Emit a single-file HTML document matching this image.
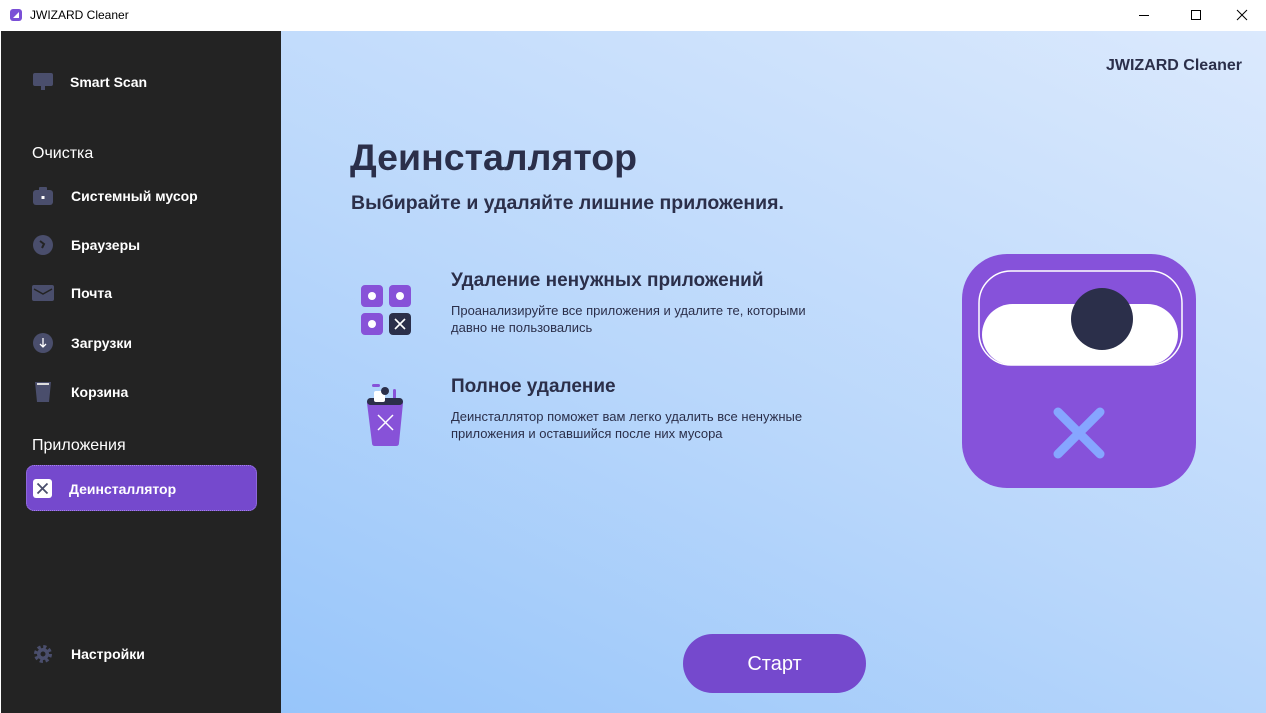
<!DOCTYPE html><html><head><meta charset="utf-8"><style>
*{margin:0;padding:0;box-sizing:border-box}
body{width:1266px;height:713px;overflow:hidden;font-family:"Liberation Sans",sans-serif;background:#fff;position:relative}
.tb{position:absolute;left:0;top:0;width:1266px;height:31px;background:#fff;font-size:12px;color:#000}
.sb{position:absolute;left:1px;top:31px;width:280px;height:682px;background:#232323;color:#fff}
.main{position:absolute;left:281px;top:31px;width:985px;height:682px;background:linear-gradient(25deg,#97c5fa 0%,#b9d7fb 45%,#dbe9fd 100%)}
.it{position:absolute;left:31px;font-size:14px;font-weight:bold;display:flex;align-items:center}
.it span{position:absolute;left:39px;white-space:nowrap}
.hd{position:absolute;left:31px;font-size:16px}
</style></head><body>
<div class="tb">
<svg style="position:absolute;left:9px;top:8px" width="14" height="14"><rect x="1" y="1" width="12" height="12" rx="3" fill="#7a4fd6"/><path d="M4 10 L10 4 L10 10Z" fill="#fff"/></svg>
<div style="position:absolute;left:30px;top:8px">JWIZARD Cleaner</div>
<div style="position:absolute;left:1139px;top:15px;width:10px;height:1px;background:#000"></div>
<div style="position:absolute;left:1191px;top:10px;width:10px;height:10px;border:1px solid #000"></div>
<svg style="position:absolute;left:1236px;top:9px" width="12" height="12"><path d="M1 1L11 11M11 1L1 11" stroke="#000"/></svg>
</div>
<div class="sb">
<div class="it" style="top:41px;left:31px"><svg width="22" height="20"><rect x="1" y="1" width="20" height="13" rx="2" fill="#4a4e6c"/><rect x="9" y="14" width="4" height="4" fill="#4a4e6c"/></svg><span style="left:38px">Smart Scan</span></div>
<div class="hd" style="top:114px">Очистка</div>
<div class="it" style="top:155px"><svg width="22" height="20"><rect x="1" y="4" width="20" height="15" rx="3" fill="#4a4e6c"/><rect x="7" y="1" width="8" height="4" rx="1" fill="#4a4e6c"/><rect x="9.5" y="10" width="3" height="3" fill="#fff"/></svg><span>Системный мусор</span></div>
<div class="it" style="top:203px"><svg width="22" height="22"><circle cx="11" cy="11" r="10" fill="#4a4e6c"/><path d="M8 7 L12 10 L10 14" stroke="#232323" stroke-width="2" fill="none"/></svg><span>Браузеры</span></div>
<div class="it" style="top:253px"><svg width="22" height="18"><rect x="0" y="1" width="22" height="16" rx="2" fill="#4a4e6c"/><path d="M2 5 L11 10 L20 5" stroke="#232323" stroke-width="1.5" fill="none"/></svg><span>Почта</span></div>
<div class="it" style="top:301px"><svg width="22" height="22"><circle cx="11" cy="11" r="10" fill="#4a4e6c"/><path d="M11 6V15M8 12L11 15L14 12" stroke="#fff" stroke-width="1.3" fill="none"/></svg><span>Загрузки</span></div>
<div class="it" style="top:349px"><svg width="22" height="24"><path d="M3 2H19L17 22H5Z" fill="#4a4e6c"/><rect x="5" y="3" width="12" height="2" fill="#ddd"/></svg><span>Корзина</span></div>
<div class="hd" style="top:406px">Приложения</div>
<div style="position:absolute;left:25px;top:434px;width:231px;height:46px;background:#7549cd;border-radius:8px;border:1px dotted #a685e8"></div>
<div class="it" style="top:447px"><svg width="22" height="22"><rect x="1" y="1" width="19" height="19" rx="3" fill="#fff"/><path d="M5.5 5.5L15.5 15.5M15.5 5.5L5.5 15.5" stroke="#4a4e6c" stroke-width="1.8"/></svg><span style="left:37px">Деинсталлятор</span></div>
<div class="it" style="top:612px"><svg width="22" height="22" viewBox="0 0 22 22"><circle cx="11" cy="11" r="7" fill="none" stroke="#4a4e6c" stroke-width="4" stroke-dasharray="3 2.5"/><circle cx="11" cy="11" r="6" fill="#4a4e6c"/><circle cx="11" cy="11" r="2.5" fill="#232323"/></svg><span>Настройки</span></div>
</div>
<div class="main">
<div style="position:absolute;right:24px;top:26px;font-size:16px;font-weight:bold;color:#2b2f4a">JWIZARD Cleaner</div>
<div style="position:absolute;left:69px;top:105px;font-size:37.5px;font-weight:bold;color:#2b2f4a">Деинсталлятор</div>
<div style="position:absolute;left:70px;top:161px;font-size:19.5px;font-weight:bold;color:#2b2f4a">Выбирайте и удаляйте лишние приложения.</div>
<svg style="position:absolute;left:79px;top:253px" width="52" height="52"><rect x="1" y="1" width="22" height="22" rx="4" fill="#8752d8"/><rect x="29" y="1" width="22" height="22" rx="4" fill="#8752d8"/><rect x="1" y="29" width="22" height="22" rx="4" fill="#8752d8"/><rect x="29" y="29" width="22" height="22" rx="4" fill="#2b2f4a"/><circle cx="12" cy="12" r="4" fill="#fff"/><circle cx="40" cy="12" r="4" fill="#fff"/><circle cx="12" cy="40" r="4" fill="#fff"/><path d="M35 35L45 45M45 35L35 45" stroke="#fff" stroke-width="1.6"/></svg>
<div style="position:absolute;left:170px;top:239px;font-size:19px;font-weight:bold;color:#2b2f4a">Удаление ненужных приложений</div>
<div style="position:absolute;left:170px;top:271px;font-size:13px;line-height:17px;color:#2b2f4a">Проанализируйте все приложения и удалите те, которыми<br>давно не пользовались</div>
<svg style="position:absolute;left:85px;top:352px" width="42" height="64"><rect x="6" y="1" width="8" height="3" rx="1.5" fill="#8752d8"/><rect x="27" y="6" width="3" height="14" rx="1.5" fill="#8752d8"/><path d="M1 20 Q1 15 6 15 H32 Q37 15 37 20 L33 60 Q33 63 30 63 H9 Q6 63 6 60Z" fill="#8752d8"/><rect x="1" y="15" width="36" height="7" rx="3.5" fill="#2b2f4a"/><rect x="8" y="8" width="11" height="11" rx="2" fill="#fff"/><circle cx="19" cy="8" r="4" fill="#2b2f4a"/><path d="M12 32L27 47M27 32L12 47" stroke="#fff" stroke-width="1.5"/></svg>
<div style="position:absolute;left:170px;top:345px;font-size:19px;font-weight:bold;color:#2b2f4a">Полное удаление</div>
<div style="position:absolute;left:170px;top:377px;font-size:13px;line-height:17px;color:#2b2f4a">Деинсталлятор поможет вам легко удалить все ненужные<br>приложения и оставшийся после них мусора</div>
<svg style="position:absolute;left:681px;top:223px" width="234" height="234"><rect width="234" height="234" rx="45" fill="#8652da"/><rect x="17" y="17" width="203" height="94" rx="32" fill="none" stroke="#fff" stroke-width="1.5"/><rect x="20" y="50" width="196" height="61" rx="30.5" fill="#fff"/><circle cx="140" cy="65" r="31" fill="#2b2f4a"/><path d="M96 158L138 200M138 158L96 200" stroke="#86a6ff" stroke-width="9" stroke-linecap="round"/></svg>
<div style="position:absolute;left:402px;top:603px;width:183px;height:59px;border-radius:30px;background:#7549cd;color:#fff;font-size:20px;text-align:center;line-height:61px">Старт</div>
</div>
</body></html>
